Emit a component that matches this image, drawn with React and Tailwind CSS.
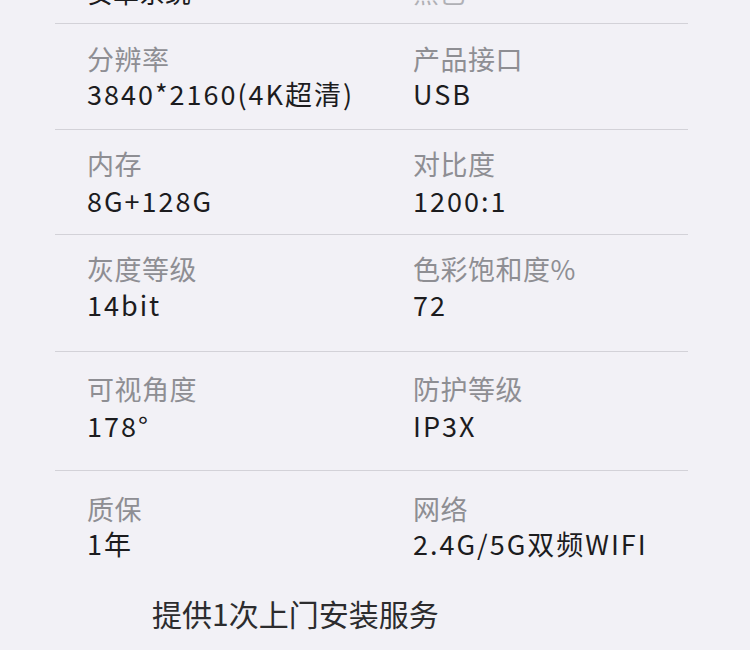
export default function App() {
  const font = { fontFamily: '"Noto Sans CJK SC", "Noto Sans", sans-serif' };
  const rows = [
    { l1: "分辨率", v1: "3840*2160(4K超清)", l2: "产品接口", v2: "USB", pt: "pt-[17px]", gap: "mt-0", pb: "pb-[18px]", border: true },
    { l1: "内存", v1: "8G+128G", l2: "对比度", v2: "1200:1", pt: "pt-[16px]", gap: "mt-[2px]", pb: "pb-[16px]", border: true },
    { l1: "灰度等级", v1: "14bit", l2: "色彩饱和度%", v2: "72", pt: "pt-[16px]", gap: "mt-[1px]", pb: "pb-[29px]", border: true },
    { l1: "可视角度", v1: "178°", l2: "防护等级", v2: "IP3X", pt: "pt-[19px]", gap: "mt-[2px]", pb: "pb-[27px]", border: true },
    { l1: "质保", v1: "1年", l2: "网络", v2: "2.4G/5G双频WIFI", pt: "pt-[20px]", gap: "mt-0", pb: "pb-0", border: false },
  ];
  return (
    <div className="w-[750px] h-[650px] bg-[#f2f1f6] overflow-hidden" style={font}>
      <div className="mx-[55px] w-[633px]">
        <div className="h-[24px] border-b border-[#d3d2d8] overflow-hidden flex items-end pb-[14px]">
          <div className="grid grid-cols-[326px_1fr] w-full pl-[32px] text-[26px] leading-[35px]">
            <div className="text-[#1c1c1e]">安卓系统</div>
            <div className="text-[#b0b0b5]">黑色</div>
          </div>
        </div>
        {rows.map((r, i) => (
          <div
            key={i}
            className={`grid grid-cols-[326px_1fr] pl-[32px] ${r.pt} ${r.pb} ${r.border ? "border-b border-[#d3d2d8]" : ""}`}
          >
            <div>
              <div className="text-[27px] leading-[35px] text-[#8e8e93] tracking-[0.5px]">{r.l1}</div>
              <div className={`text-[27px] leading-[35px] text-[#1c1c1e] tracking-[2px] ${r.gap}`}>{r.v1}</div>
            </div>
            <div>
              <div className="text-[27px] leading-[35px] text-[#8e8e93] tracking-[0.5px]">{r.l2}</div>
              <div className={`text-[27px] leading-[35px] text-[#1c1c1e] tracking-[2px] ${r.gap}`}>{r.v2}</div>
            </div>
          </div>
        ))}
      </div>
      <div className="mt-[32px] pl-[152px] text-[30px] leading-[40px] text-[#2c2c2e]">提供1次上门安装服务</div>
    </div>
  );
}
